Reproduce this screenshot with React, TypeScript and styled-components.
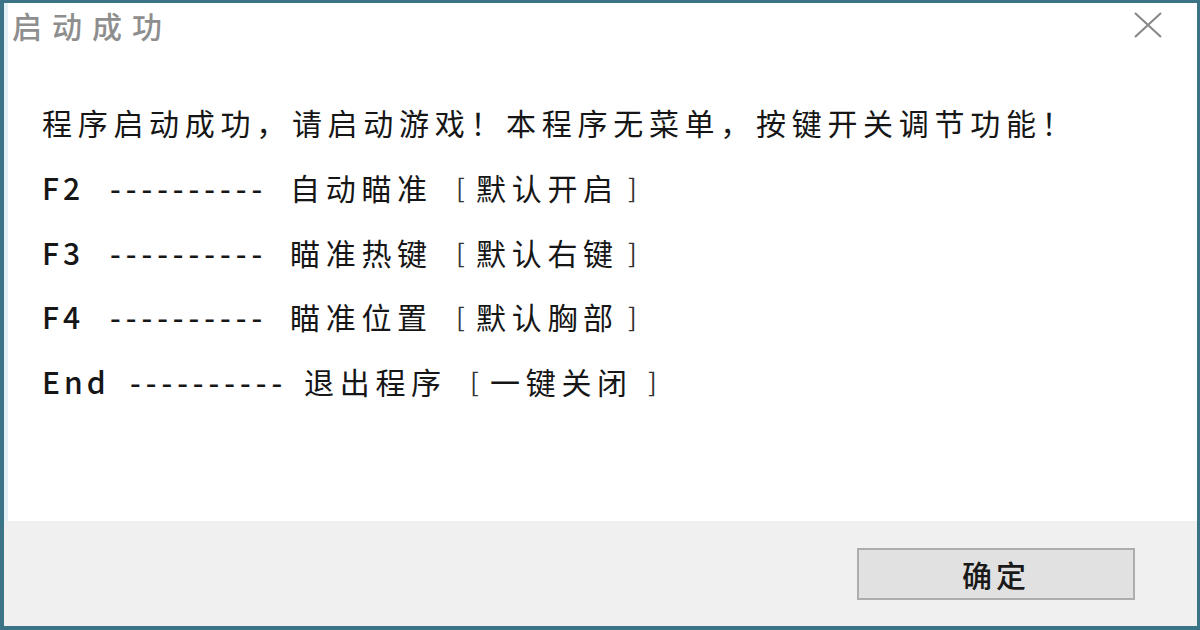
import React from "react";
import styled, { createGlobalStyle } from "styled-components";

const Global = createGlobalStyle`
  html, body { margin: 0; padding: 0; background: #3a7388; }
  body { font-family: "Noto Sans CJK SC", "Noto Sans", sans-serif; }
`;

const Frame = styled.div`
  width: 1200px;
  height: 630px;
  box-sizing: border-box;
  border-style: solid;
  border-color: #3b7487;
  border-width: 3px 3px 4px 4px;
  background: #ffffff;
  display: flex;
  flex-direction: column;
  overflow: hidden;
`;

const TitleBar = styled.div`
  height: 44px;
  display: flex;
  align-items: center;
  justify-content: space-between;
  padding: 0 32px 0 8px;
  box-shadow: inset 4px 0 0 #e3f1f6;
`;

const Title = styled.div`
  font-size: 30px;
  letter-spacing: 10px;
  color: #8e8e8e;
  font-weight: 500;
  line-height: 1;
`;

const CloseBtn = styled.div`
  width: 34px;
  height: 30px;
  display: flex;
  align-items: center;
  justify-content: center;
`;

const Content = styled.div`
  flex: 1;
  display: flex;
  flex-direction: column;
  padding: 57px 0 0 38px;
  gap: 28.8px;
  box-shadow: inset 4px 0 0 #e3f1f6;
`;

const Line = styled.div`
  display: flex;
  align-items: center;
  height: 36px;
  font-size: 30px;
  font-weight: 400;
  letter-spacing: 5.7px;
  color: #161616;
  white-space: pre;
  line-height: 1;
`;

const Key = styled.span<{ $w: number }>`
  width: ${(p) => p.$w}px;
  letter-spacing: 4px;
  font-weight: 500;
`;

const Dashes = styled.span<{ $w: number }>`
  width: ${(p) => p.$w}px;
  letter-spacing: 5px;
  font-weight: 500;
`;

const Field = styled.span<{ $w: number }>`
  width: ${(p) => p.$w}px;
`;

const Bracket = styled.span<{ $w: number }>`
  width: ${(p) => p.$w}px;
  font-size: 26px;
  color: #333;
`;

const Footer = styled.div`
  height: 105px;
  background: #f0f0f0;
  display: flex;
  justify-content: flex-end;
  align-items: flex-start;
  padding: 27px 62px 0 0;
  box-sizing: border-box;
`;

const Button = styled.div`
  width: 278px;
  height: 52px;
  box-sizing: border-box;
  border: 2px solid #adadad;
  background: #e1e1e1;
  display: flex;
  align-items: center;
  justify-content: center;
  font-size: 30px;
  font-weight: 500;
  letter-spacing: 4px;
  color: #1a1a1a;
`;

type Row = {
  key: string;
  kw: number;
  dw: number;
  label: string;
  lw: number;
  value: string;
  vw: number;
};

const rows: Row[] = [
  { key: "F2", kw: 68, dw: 180, label: "自动瞄准", lw: 166, value: "默认开启", vw: 152 },
  { key: "F3", kw: 68, dw: 180, label: "瞄准热键", lw: 166, value: "默认右键", vw: 152 },
  { key: "F4", kw: 68, dw: 180, label: "瞄准位置", lw: 166, value: "默认胸部", vw: 152 },
  { key: "End", kw: 88, dw: 174, label: "退出程序", lw: 166, value: "一键关闭", vw: 158 },
];

export default function App() {
  return (
    <>
      <Global />
      <Frame>
        <TitleBar>
          <Title>启动成功</Title>
          <CloseBtn>
            <svg width="32" height="28" viewBox="0 0 32 28">
              <path d="M3 2 L29 26 M29 2 L3 26" stroke="#8a8a8a" strokeWidth="2.2" fill="none" />
            </svg>
          </CloseBtn>
        </TitleBar>
        <Content>
          <Line>程序启动成功，请启动游戏！本程序无菜单，按键开关调节功能！</Line>
          {rows.map((r) => (
            <Line key={r.key}>
              <Key $w={r.kw}>{r.key}</Key>
              <Dashes $w={r.dw}>----------</Dashes>
              <Field $w={r.lw}>{r.label}</Field>
              <Bracket $w={20}>[</Bracket>
              <Field $w={r.vw}>{r.value}</Field>
              <Bracket $w={20}>]</Bracket>
            </Line>
          ))}
        </Content>
        <Footer>
          <Button>确定</Button>
        </Footer>
      </Frame>
    </>
  );
}
